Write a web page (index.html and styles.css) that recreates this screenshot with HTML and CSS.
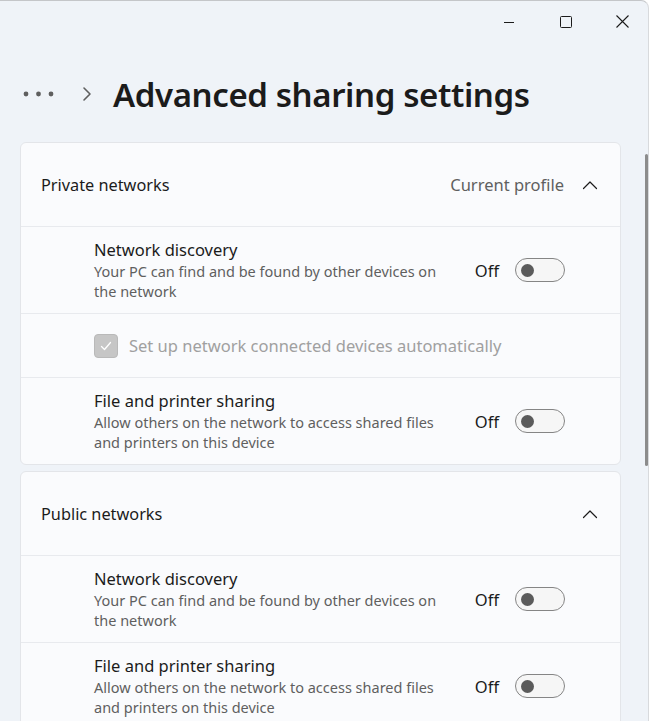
FILE: index.html
```html
<!DOCTYPE html>
<html lang="en">
<head>
    <meta charset="UTF-8">
    <meta name="viewport" content="width=device-width, initial-scale=1.0">
    <title>Advanced sharing settings</title>
    <link rel="stylesheet" href="styles.css">
</head>
<body>
    <div class="window">
        <!-- caption buttons -->
        <div class="titlebar">
            <span class="caption-btn">
                <svg width="12" height="12" viewBox="0 0 12 12"><path d="M1 6.5h10" stroke="#1b1b1b" stroke-width="1"/></svg>
            </span>
            <span class="caption-btn">
                <svg width="12" height="12" viewBox="0 0 12 12"><rect x="0.5" y="0.5" width="11" height="11" rx="1" fill="none" stroke="#1b1b1b" stroke-width="1"/></svg>
            </span>
            <span class="caption-btn">
                <svg width="13" height="13" viewBox="0 0 13 13"><path d="M0.5 0.5l12 12M12.5 0.5l-12 12" stroke="#1b1b1b" stroke-width="1.1"/></svg>
            </span>
        </div>

        <!-- breadcrumb -->
        <div class="breadcrumb">
            <svg class="more" width="32" height="8" viewBox="0 0 32 8"><circle cx="3" cy="4" r="2.4" fill="#5f5f5f"/><circle cx="15.5" cy="4" r="2.4" fill="#5f5f5f"/><circle cx="28" cy="4" r="2.4" fill="#5f5f5f"/></svg>
            <svg class="crumb-chevron" width="10" height="16" viewBox="0 0 10 16"><path d="M2 2l6 6-6 6" fill="none" stroke="#5f5f5f" stroke-width="1.6" stroke-linecap="round" stroke-linejoin="round"/></svg>
            <h1>Advanced sharing settings</h1>
        </div>

        <div class="content">
            <!-- Private networks -->
            <div class="card">
                <div class="card-head">
                    <span class="card-title">Private networks</span>
                    <span class="card-note">Current profile</span>
                    <svg class="expand" width="16" height="10" viewBox="0 0 16 10"><path d="M1.5 8.5L8 2l6.5 6.5" fill="none" stroke="#1b1b1b" stroke-width="1.2" stroke-linecap="round" stroke-linejoin="round"/></svg>
                </div>
                <div class="row">
                    <div class="row-text">
                        <div class="row-title">Network discovery</div>
                        <div class="row-desc">Your PC can find and be found by other devices on the network</div>
                    </div>
                    <span class="state">Off</span>
                    <span class="toggle"><span class="knob"></span></span>
                </div>
                <div class="row row-check">
                    <span class="checkbox">
                        <svg width="14" height="14" viewBox="0 0 14 14"><path d="M2.5 7.5l3 3 6-7" fill="none" stroke="#fff" stroke-width="1.3" stroke-linecap="round" stroke-linejoin="round"/></svg>
                    </span>
                    <span class="check-label">Set up network connected devices automatically</span>
                </div>
                <div class="row">
                    <div class="row-text">
                        <div class="row-title">File and printer sharing</div>
                        <div class="row-desc">Allow others on the network to access shared files and printers on this device</div>
                    </div>
                    <span class="state">Off</span>
                    <span class="toggle"><span class="knob"></span></span>
                </div>
            </div>

            <!-- Public networks -->
            <div class="card">
                <div class="card-head">
                    <span class="card-title">Public networks</span>
                    <svg class="expand" width="16" height="10" viewBox="0 0 16 10"><path d="M1.5 8.5L8 2l6.5 6.5" fill="none" stroke="#1b1b1b" stroke-width="1.2" stroke-linecap="round" stroke-linejoin="round"/></svg>
                </div>
                <div class="row">
                    <div class="row-text">
                        <div class="row-title">Network discovery</div>
                        <div class="row-desc">Your PC can find and be found by other devices on the network</div>
                    </div>
                    <span class="state">Off</span>
                    <span class="toggle"><span class="knob"></span></span>
                </div>
                <div class="row">
                    <div class="row-text">
                        <div class="row-title">File and printer sharing</div>
                        <div class="row-desc">Allow others on the network to access shared files and printers on this device</div>
                    </div>
                    <span class="state">Off</span>
                    <span class="toggle"><span class="knob"></span></span>
                </div>
            </div>
        </div>

        <div class="scrollbar"></div>
    </div>
</body>
</html>
```

FILE: styles.css
```css
html, body {
    margin: 0;
    padding: 0;
    background: #ffffff;
}
body {
    font-family: "Noto Sans", "Open Sans", sans-serif;
    color: #1b1b1b;
    overflow: hidden;
}
.window {
    position: relative;
    width: 648px;
    height: 720px;
    background: #eff3f8;
    border-top: 1px solid #c4c6c9;
    border-right: 1px solid #d8dadd;
    border-top-right-radius: 8px;
    overflow: hidden;
}
.titlebar {
    display: flex;
    justify-content: flex-end;
    height: 41px;
    margin-right: -3px;
}
.caption-btn {
    width: 57px;
    display: flex;
    align-items: center;
    justify-content: center;
}
.breadcrumb {
    display: flex;
    align-items: center;
    height: 100px;
    padding-left: 23px;
    margin-top: 2px;
}
.more {
    margin-right: 27px;
}
.crumb-chevron {
    margin-right: 21px;
}
h1 {
    margin: 0;
    font-size: 33px;
    font-weight: 600;
    letter-spacing: -0.4px;
}
.content {
    display: flex;
    flex-direction: column;
    gap: 6px;
    padding: 0 27px 0 20px;
    margin-top: -2px;
}
.card {
    background: #fafbfd;
    border: 1px solid #e3e5e9;
    border-radius: 6px;
}
.card-head {
    display: flex;
    align-items: center;
    height: 83px;
    padding: 0 22px 0 20px;
    font-size: 16.3px;
}
.card-title {
    flex: 1;
}
.card-note {
    color: #5f5f5f;
    margin-right: 18px;
    font-size: 16.5px;
}
.row {
    display: flex;
    align-items: center;
    min-height: 86px;
    padding: 0 55px 0 73px;
    border-top: 1px solid #e8eaee;
}
.row-text {
    flex: 1;
    padding-right: 30px;
}
.row-title {
    font-size: 16.5px;
    line-height: 22px;
}
.row-desc {
    font-size: 14.5px;
    line-height: 20px;
    color: #5f5f5f;
    max-width: 350px;
}
.state {
    font-size: 16.5px;
    margin-right: 16px;
}
.toggle {
    width: 43px;
    height: 22px;
    border: 1px solid #858585;
    border-radius: 12px;
    background: #f6f6f6;
    display: flex;
    align-items: center;
    padding-left: 5px;
    box-sizing: content-box;
}
.toggle .knob {
    width: 13px;
    height: 13px;
    border-radius: 50%;
    background: #5b5b5b;
}
.row-check {
    min-height: 63px;
}
.checkbox {
    width: 22px;
    height: 22px;
    border: 1px solid #b9b9b9;
    border-radius: 4px;
    background: #c6c6c6;
    display: flex;
    align-items: center;
    justify-content: center;
    margin-right: 11px;
}
.check-label {
    font-size: 16.5px;
    color: #a0a0a0;
}
.scrollbar {
    position: absolute;
    left: 645px;
    top: 153px;
    width: 3px;
    height: 312px;
    background: #8c8c8c;
    border-radius: 2px;
}
```
